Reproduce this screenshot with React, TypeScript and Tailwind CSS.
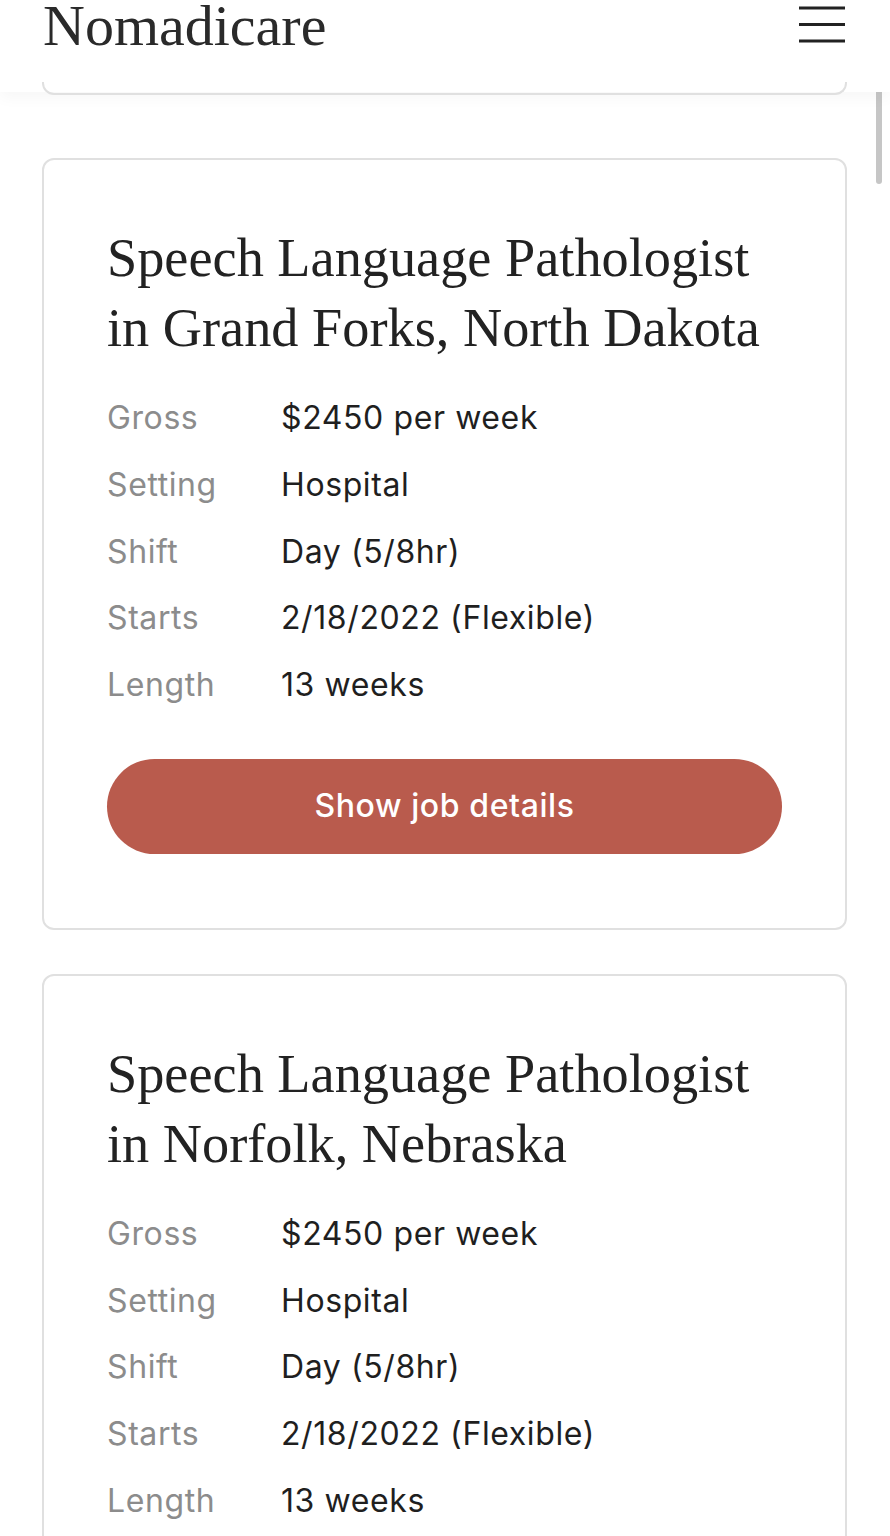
import React from 'react';

type Job = {
  title: string;
  place: string;
  gross: string;
  setting: string;
  shift: string;
  starts: string;
  length: string;
};

const jobs: Job[] = [
  {
    title: 'Speech Language Pathologist',
    place: 'in Grand Forks, North Dakota',
    gross: '$2450 per week',
    setting: 'Hospital',
    shift: 'Day (5/8hr)',
    starts: '2/18/2022 (Flexible)',
    length: '13 weeks',
  },
  {
    title: 'Speech Language Pathologist',
    place: 'in Norfolk, Nebraska',
    gross: '$2450 per week',
    setting: 'Hospital',
    shift: 'Day (5/8hr)',
    starts: '2/18/2022 (Flexible)',
    length: '13 weeks',
  },
];

const serif = { fontFamily: '"Liberation Serif", "Times New Roman", serif' };
const sans = { fontFamily: 'Inter, "Liberation Sans", Arial, sans-serif' };

const JobCard = ({ job }: { job: Job }) => {
  const rows: [string, string][] = [
    ['Gross', job.gross],
    ['Setting', job.setting],
    ['Shift', job.shift],
    ['Starts', job.starts],
    ['Length', job.length],
  ];
  return (
    <div className="bg-white border-2 border-[#e0e0e0] rounded-xl pt-[63px] pb-[74px] px-[63px]">
      <h2 className="text-[54.3px] leading-[70px] text-[#222222]" style={serif}>
        {job.title}
        <br />
        {job.place}
      </h2>
      <div className="mt-[22px] text-[32px] leading-[66.75px] tracking-[0.6px]" style={sans}>
        {rows.map(([label, value]) => (
          <div key={label} className="flex">
            <span className="w-[174px] shrink-0 text-[#8c8c8c]">{label}</span>
            <span className="text-[#1f1f1f]">{value}</span>
          </div>
        ))}
      </div>
      <button
        className="mt-[40px] w-full h-[95px] rounded-full bg-[#b95b4d] text-white text-[32px] font-medium tracking-[0.6px]"
        style={sans}
      >
        Show job details
      </button>
    </div>
  );
};

const App = () => {
  return (
    <div className="relative w-full h-[1536px] overflow-hidden bg-white">
      <header className="relative z-10 h-[92px] bg-white flex justify-between items-start pl-[43px] pr-[45px] shadow-[0_6px_14px_rgba(0,0,0,0.035)]">
        <h1 className="text-[58px] leading-[52px] text-[#2a2a2a]" style={serif}>
          Nomadicare
        </h1>
        <svg width="46" height="40" viewBox="0 0 46 40" className="mt-[5px]">
          <rect x="0" y="1.5" width="46" height="3" fill="#222" />
          <rect x="0" y="18" width="46" height="3" fill="#222" />
          <rect x="0" y="34.5" width="46" height="3" fill="#222" />
        </svg>
      </header>

      <div className="pl-[42px] pr-[43px]">
        {/* bottom of the previous card, tucked under the header */}
        <div className="relative z-20 -mt-[10px] h-[13px] border-2 border-t-0 border-[#e0e0e0] rounded-b-xl" />
        <div className="mt-[63px] flex flex-col gap-[44px]">
          {jobs.map((job, i) => (
            <JobCard key={i} job={job} />
          ))}
        </div>
      </div>

      {/* scroll indicator */}
      <div className="absolute left-[876px] top-[60px] w-[6px] h-[124px] rounded-full bg-[#c6c6c6]" />
    </div>
  );
};

export default App;
